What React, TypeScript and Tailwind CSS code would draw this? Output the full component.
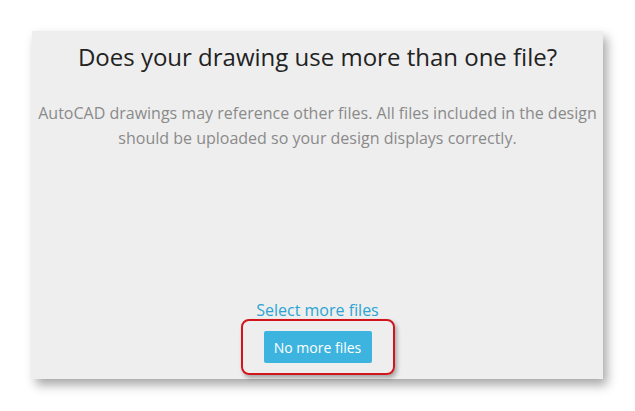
export default function App() {
  return (
    <div className="w-[635px] h-[411px] bg-white pt-[31px] pl-[32px]" style={{ fontFamily: '"Open Sans", sans-serif' }}>
      <div className="w-[571px] h-[348px] bg-[#eeeeee] shadow-[4px_6px_10px_rgba(0,0,0,0.35)] flex flex-col items-center">
        <h1 className="mt-[10px] text-[24px] leading-[32px] text-[#222222]">
          Does your drawing use more than one file?
        </h1>
        <p className="mt-[28px] text-[16px] leading-[25px] text-[#8a8a8a] text-center px-[2px]">
          AutoCAD drawings may reference other files. All files included in the design should be uploaded so your design displays correctly.
        </p>
        <div className="flex-1" />
        <a href="#" className="text-[16px] leading-[20px] text-[#2aa5d3]">Select more files</a>
        <div className="mt-[-1px] mb-[4px] w-[154px] h-[56px] rounded-[8px] border-2 border-[#d0161c] shadow-[2px_3px_4px_rgba(0,0,0,0.3)] flex items-center justify-center">
          <button className="w-[108px] h-[32px] rounded-[2px] bg-[#3db4e0] text-white text-[14px]">
            No more files
          </button>
        </div>
      </div>
    </div>
  );
}
